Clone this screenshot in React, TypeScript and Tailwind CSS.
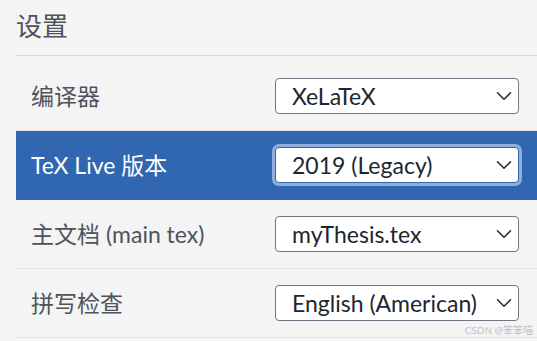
import { ChevronDown } from 'lucide-react';

const rows = [
  { label: '编译器', value: 'XeLaTeX', active: false },
  { label: 'TeX Live 版本', value: '2019 (Legacy)', active: true },
  { label: '主文档 (main tex)', value: 'myThesis.tex', active: false },
  { label: '拼写检查', value: 'English (American)', active: false },
];

export default function App() {
  return (
    <div
      className="relative w-[537px] h-[341px] overflow-hidden bg-[#f4f4f4]"
      style={{ fontFamily: 'Lato, "Noto Sans CJK SC", sans-serif' }}
    >
      <div className="ml-4">
        <h1 className="h-[56px] pt-[10px] text-[26px] leading-[32px] text-[#4d535b] border-b border-[#d6dae0]">
          设置
        </h1>
        <div className="mt-[6px]">
          {rows.map(row => (
            <div
              key={row.label}
              className={`flex items-center justify-between h-[69px] pl-[15px] pr-[18px] border-b ${
                row.active ? 'bg-[#3166b1] border-[#3166b1]' : 'border-[#e3e3e3]'
              }`}
            >
              <span className={`text-[23px] ${row.active ? 'text-white' : 'text-[#4d535b]'}`}>
                {row.label}
              </span>
              <div
                className={`flex items-center justify-between w-[244px] h-[36px] pl-4 pr-[1px] bg-white rounded-[4px] border ${
                  row.active
                    ? 'border-[#3166b1] ring-[3px] ring-[#8eaee0]'
                    : 'border-[#6f7784]'
                }`}
              >
                <span className="text-[23px] text-[#202530]">{row.value}</span>
                <ChevronDown className="w-[26px] h-[26px] text-[#2a2f38]" strokeWidth={1.5} />
              </div>
            </div>
          ))}
        </div>
      </div>
      <span className="absolute right-[4px] bottom-[6px] text-[10px] leading-none text-[#c2c2c2]">
        CSDN @笨笨喵
      </span>
    </div>
  );
}
